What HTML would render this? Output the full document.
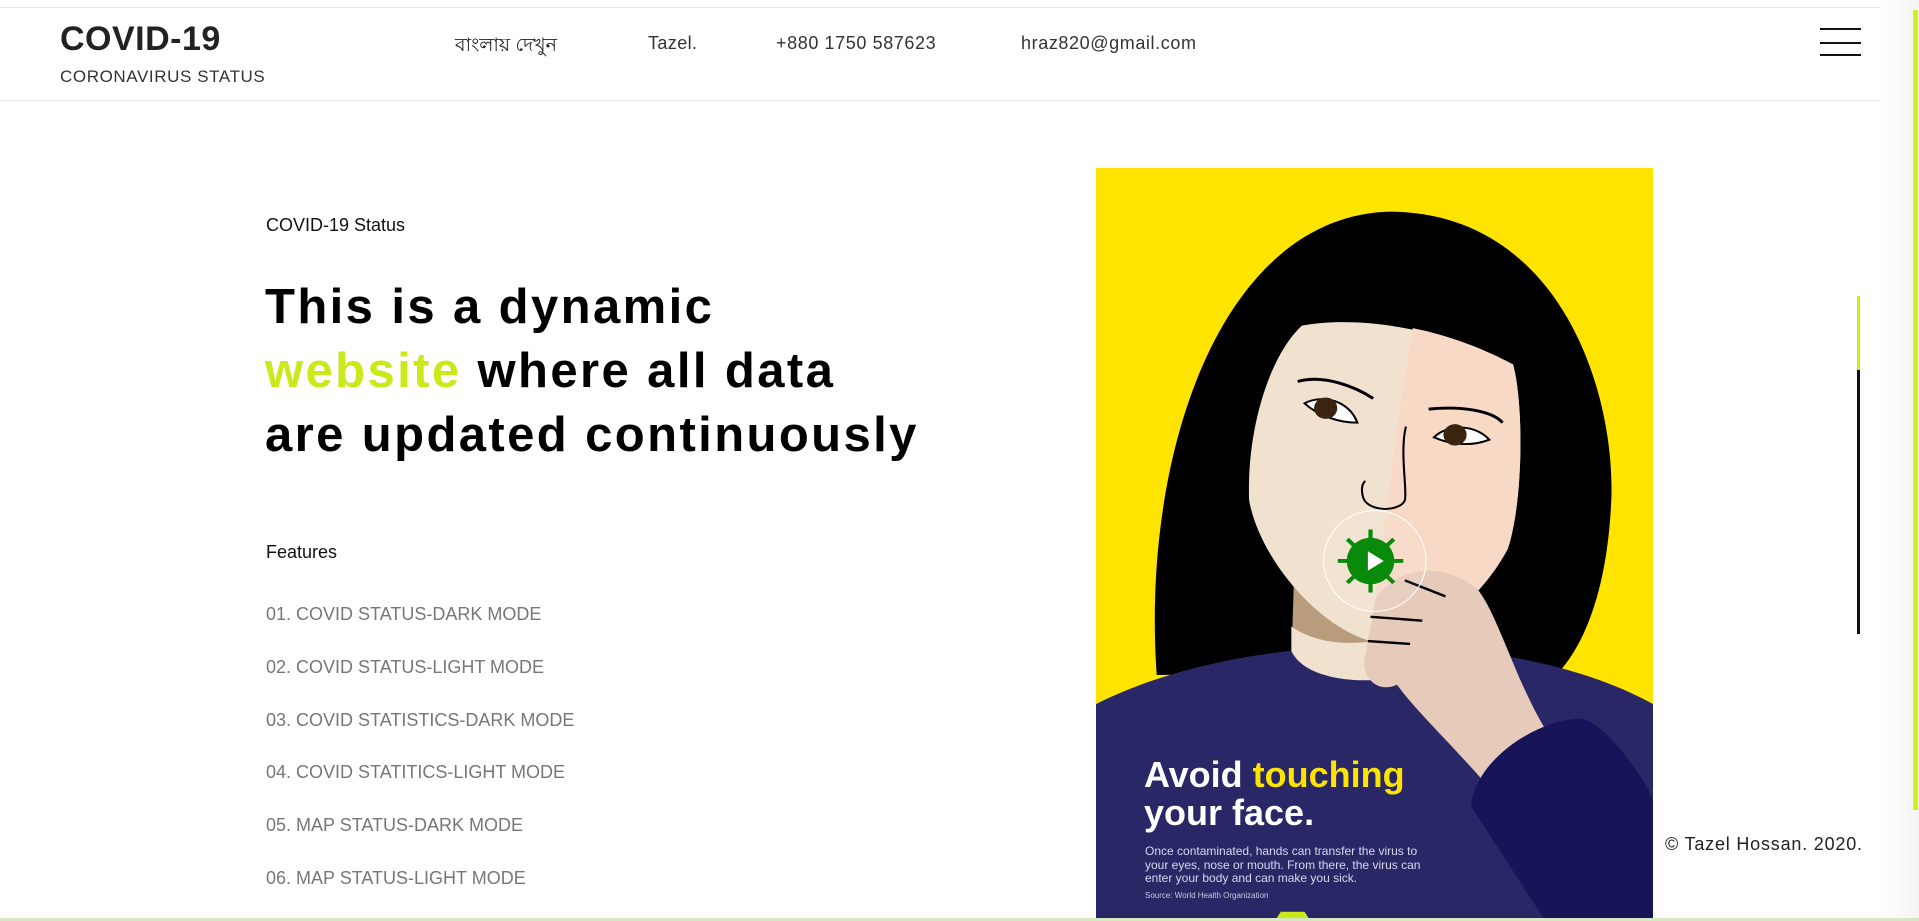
<!DOCTYPE html>
<html><head><meta charset="utf-8"><style>
*{margin:0;padding:0;box-sizing:border-box}
html,body{width:1919px;height:921px;overflow:hidden;background:#fff;font-family:"Liberation Sans","Noto Sans CJK SC",sans-serif;position:relative}
.a{position:absolute;white-space:nowrap}
</style></head><body>
<div class="a" style="left:0;top:7px;width:1919px;height:1px;background:#e4e4e4"></div>
<div class="a" style="left:0;top:100px;width:1919px;height:1px;background:#e8e8e8"></div>
<div class="a" style="left:1880px;top:0;width:39px;height:921px;background:linear-gradient(90deg,#fff,#f4f4f4)"></div>
<div class="a" style="left:1913px;top:10px;width:5px;height:800px;background:#d4ef1a"></div>
<div class="a" style="left:60px;top:20px;font-size:34px;font-weight:bold;color:#222;letter-spacing:0.5px">COVID-19</div>
<div class="a" style="left:60px;top:67px;font-size:17px;color:#333;letter-spacing:0.6px">CORONAVIRUS STATUS</div>
<div class="a" style="left:455px;top:31px;font-size:19px;color:#222">বাংলায় দেখুন</div>
<div class="a" style="left:648px;top:33px;font-size:18px;color:#333;letter-spacing:0.4px">Tazel.</div>
<div class="a" style="left:776px;top:33px;font-size:18px;color:#333;letter-spacing:0.6px">+880 1750 587623</div>
<div class="a" style="left:1021px;top:33px;font-size:18px;color:#333;letter-spacing:0.6px">hraz820@gmail.com</div>
<div class="a" style="left:1820px;top:28px;width:41px;height:2px;background:#111"></div>
<div class="a" style="left:1820px;top:42px;width:41px;height:2px;background:#111"></div>
<div class="a" style="left:1820px;top:54px;width:41px;height:2px;background:#111"></div>

<div class="a" style="left:266px;top:215px;font-size:18px;color:#111">COVID-19 Status</div>
<div class="a" style="left:265px;top:275px;font-size:49px;font-weight:bold;color:#000;line-height:64px;letter-spacing:2.4px">This is a dynamic<br><span style="color:#cbe81a">website</span> where all data<br>are updated continuously</div>
<div class="a" style="left:266px;top:542px;font-size:18px;color:#111">Features</div>
<div class="a" style="left:266px;top:588px;font-size:18px;color:#777;line-height:52.8px">01. COVID STATUS-DARK MODE<br>02. COVID STATUS-LIGHT MODE<br>03. COVID STATISTICS-DARK MODE<br>04. COVID STATITICS-LIGHT MODE<br>05. MAP STATUS-DARK MODE<br>06. MAP STATUS-LIGHT MODE</div>

<div class="a" style="left:1857px;top:296px;width:3px;height:90px;background:#cbe81a"></div>
<div class="a" style="left:1857px;top:370px;width:3px;height:264px;background:#111"></div>
<div class="a" style="left:1665px;top:834px;font-size:18px;color:#222;letter-spacing:0.8px">© Tazel Hossan. 2020.</div>

<svg class="a" style="left:1096px;top:168px" width="557" height="752" viewBox="10 15 1055 1550" preserveAspectRatio="none">
<rect x="10" y="15" width="1055" height="1550" fill="#ffe400"/>
<path d="M125 1060 C95 600 250 110 570 105 C900 110 1000 500 985 720 C975 900 930 1000 890 1050 Z" fill="#000"/>
<path d="M385 860 L380 1030 L520 1060 L530 960 Z" fill="#b89c7b"/>
<path d="M10 1120 C300 960 800 960 1065 1120 L1065 1565 L10 1565 Z" fill="#292766"/>
<path d="M380 1010 C400 1060 480 1075 540 1070 L540 990 C470 1000 420 990 380 960 Z" fill="#f1e2d0"/>
<path d="M400 340 C500 320 650 340 800 420 C820 500 820 700 790 800 C740 900 650 990 530 990 C430 960 320 820 300 700 C295 550 340 400 400 340 Z" fill="#f1e2d0"/>
<path d="M610 345 C680 360 750 390 800 420 C820 500 820 700 790 800 C740 900 650 990 530 990 L580 550 Z" fill="#f7d9c5"/>
<path d="M540 900 C600 820 680 840 730 880 C770 930 800 1060 860 1170 L930 1250 L760 1300 C700 1220 620 1140 580 1080 C540 1100 510 1060 520 1020 Z" fill="#e6cbbb"/>
<path d="M720 1330 C730 1230 850 1150 930 1150 C980 1160 1065 1300 1065 1320 L1065 1565 L860 1565 Z" fill="#17145a"/>
<path d="M392 455 C440 440 500 465 535 490" stroke="#000" stroke-width="6" fill="none"/>
<path d="M640 512 C700 505 760 515 780 540" stroke="#000" stroke-width="6" fill="none"/>
<path d="M405 500 C440 480 490 495 505 540 C470 540 430 525 405 500 Z" fill="#fff" stroke="#000" stroke-width="4"/>
<ellipse cx="445" cy="510" rx="22" ry="22" fill="#3a2410"/>
<path d="M650 570 C680 540 730 545 755 575 C720 590 680 585 650 570 Z" fill="#fff" stroke="#000" stroke-width="4"/>
<ellipse cx="690" cy="565" rx="22" ry="22" fill="#3a2410"/>
<path d="M597 548 C585 600 600 680 595 700 C585 725 520 725 515 690 C512 675 515 665 520 660" stroke="#000" stroke-width="4" fill="none"/>
<path d="M595 865 L672 898 M530 940 L628 948 M525 990 L605 996" stroke="#000" stroke-width="5" fill="none"/>
<ellipse cx="538" cy="825" rx="97" ry="104" fill="rgba(255,255,255,0.08)" stroke="#fff" stroke-width="2"/>
<g fill="#0a8a0a" stroke="#0a8a0a" stroke-width="8">
<line x1="530" y1="825" x2="530" y2="760"/><line x1="530" y1="825" x2="530" y2="890"/>
<line x1="530" y1="825" x2="468" y2="825"/><line x1="530" y1="825" x2="592" y2="825"/>
<line x1="530" y1="825" x2="486" y2="780"/><line x1="530" y1="825" x2="574" y2="870"/>
<line x1="530" y1="825" x2="574" y2="780"/><line x1="530" y1="825" x2="486" y2="870"/>
</g>
<ellipse cx="530" cy="825" rx="45" ry="48" fill="#0a8a0a"/>
<path d="M525 805 L555 825 L525 845 Z" fill="#fff"/>
<path d="M350 1565 L360 1548 L405 1548 L415 1565 Z" fill="#cbe81a"/>
</svg>
<div class="a" style="left:1144px;top:756px;font-size:36px;font-weight:bold;color:#fff;line-height:38px">Avoid <span style="color:#ffe400">touching</span><br>your face.</div>
<div class="a" style="left:1145px;top:845px;font-size:12px;color:#d8d8ee;line-height:13.5px">Once contaminated, hands can transfer the virus to<br>your eyes, nose or mouth. From there, the virus can<br>enter your body and can make you sick.</div>
<div class="a" style="left:1145px;top:891px;font-size:8px;color:#c8c8e0">Source: World Health Organization</div>
<div class="a" style="left:0;top:918px;width:1919px;height:3px;background:#d5e8c0"></div>
</body></html>
